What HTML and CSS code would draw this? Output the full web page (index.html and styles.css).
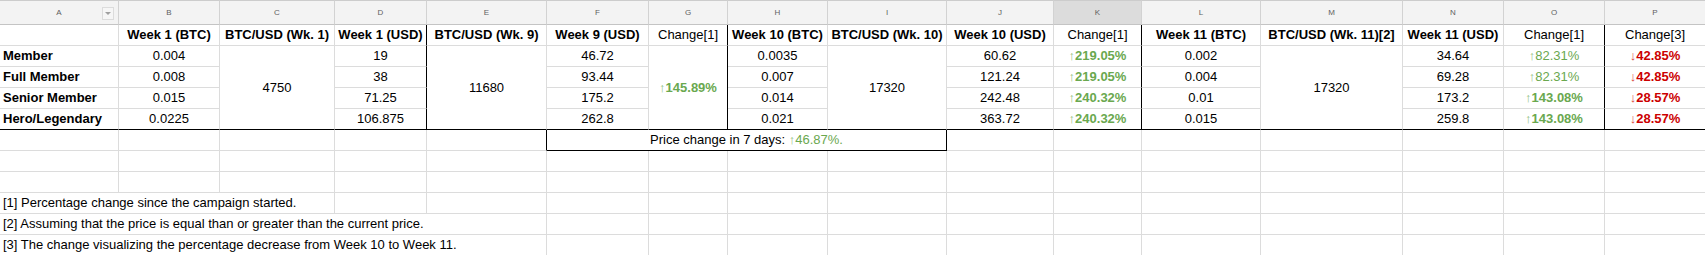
FILE: index.html
```html
<!DOCTYPE html>
<html>
<head>
<meta charset="utf-8">
<link rel="stylesheet" href="styles.css">
</head>
<body>
<div class="sheet">
  <!-- column headers -->
  <div class="h ha">A<span class="filter"><span class="tri"></span></span></div>
  <div class="h">B</div>
  <div class="h">C</div>
  <div class="h">D</div>
  <div class="h">E</div>
  <div class="h">F</div>
  <div class="h">G</div>
  <div class="h">H</div>
  <div class="h">I</div>
  <div class="h">J</div>
  <div class="h sel">K</div>
  <div class="h">L</div>
  <div class="h">M</div>
  <div class="h">N</div>
  <div class="h">O</div>
  <div class="h">P</div>

  <!-- row 1 -->
  <div class="c"></div>
  <div class="c b">Week 1 (BTC)</div>
  <div class="c b">BTC/USD (Wk. 1)</div>
  <div class="c b kr">Week 1 (USD)</div>
  <div class="c b">BTC/USD (Wk. 9)</div>
  <div class="c b">Week 9 (USD)</div>
  <div class="c kr">Change[1]</div>
  <div class="c b">Week 10 (BTC)</div>
  <div class="c b">BTC/USD (Wk. 10)</div>
  <div class="c b">Week 10 (USD)</div>
  <div class="c kr">Change[1]</div>
  <div class="c b">Week 11 (BTC)</div>
  <div class="c b">BTC/USD (Wk. 11)[2]</div>
  <div class="c b">Week 11 (USD)</div>
  <div class="c kr">Change[1]</div>
  <div class="c">Change[3]</div>

  <!-- row 2 -->
  <div class="c l b">Member</div>
  <div class="c">0.004</div>
  <div class="c m4">4750</div>
  <div class="c kr">19</div>
  <div class="c m4">11680</div>
  <div class="c">46.72</div>
  <div class="c m4 kr g b"><span class="ar">↑</span>145.89%</div>
  <div class="c">0.0035</div>
  <div class="c m4">17320</div>
  <div class="c">60.62</div>
  <div class="c kr g b"><span class="ar">↑</span>219.05%</div>
  <div class="c">0.002</div>
  <div class="c m4">17320</div>
  <div class="c">34.64</div>
  <div class="c kr g"><span class="ar">↑</span>82.31%</div>
  <div class="c r b"><span class="ar">↓</span>42.85%</div>

  <!-- row 3 -->
  <div class="c l b">Full Member</div>
  <div class="c">0.008</div>
  <div class="c kr">38</div>
  <div class="c">93.44</div>
  <div class="c">0.007</div>
  <div class="c">121.24</div>
  <div class="c kr g b"><span class="ar">↑</span>219.05%</div>
  <div class="c">0.004</div>
  <div class="c">69.28</div>
  <div class="c kr g"><span class="ar">↑</span>82.31%</div>
  <div class="c r b"><span class="ar">↓</span>42.85%</div>

  <!-- row 4 -->
  <div class="c l b">Senior Member</div>
  <div class="c">0.015</div>
  <div class="c kr">71.25</div>
  <div class="c">175.2</div>
  <div class="c">0.014</div>
  <div class="c">242.48</div>
  <div class="c kr g b"><span class="ar">↑</span>240.32%</div>
  <div class="c">0.01</div>
  <div class="c">173.2</div>
  <div class="c kr g b"><span class="ar">↑</span>143.08%</div>
  <div class="c r b"><span class="ar">↓</span>28.57%</div>

  <!-- row 5 -->
  <div class="c l b kb">Hero/Legendary</div>
  <div class="c kb">0.0225</div>
  <div class="c kr kb">106.875</div>
  <div class="c kb">262.8</div>
  <div class="c kb">0.021</div>
  <div class="c kb">363.72</div>
  <div class="c kr kb g b"><span class="ar">↑</span>240.32%</div>
  <div class="c kb">0.015</div>
  <div class="c kb">259.8</div>
  <div class="c kr kb g b"><span class="ar">↑</span>143.08%</div>
  <div class="c kb r b"><span class="ar">↓</span>28.57%</div>

  <!-- row 6 -->
  <div class="c"></div>
  <div class="c"></div>
  <div class="c"></div>
  <div class="c"></div>
  <div class="c kr"></div>
  <div class="c span4 kr kb">Price change in 7 days:&nbsp;<span class="g"><span class="ar">↑</span>46.87%.</span></div>
  <div class="c"></div>
  <div class="c"></div>
  <div class="c"></div>
  <div class="c"></div>
  <div class="c"></div>
  <div class="c"></div>
  <div class="c"></div>

  <!-- row 7 -->
  <div class="c"></div><div class="c"></div><div class="c"></div><div class="c"></div>
  <div class="c"></div><div class="c"></div><div class="c"></div><div class="c"></div>
  <div class="c"></div><div class="c"></div><div class="c"></div><div class="c"></div>
  <div class="c"></div><div class="c"></div><div class="c"></div><div class="c"></div>

  <!-- row 8 -->
  <div class="c"></div><div class="c"></div><div class="c"></div><div class="c"></div>
  <div class="c"></div><div class="c"></div><div class="c"></div><div class="c"></div>
  <div class="c"></div><div class="c"></div><div class="c"></div><div class="c"></div>
  <div class="c"></div><div class="c"></div><div class="c"></div><div class="c"></div>

  <!-- row 9 -->
  <div class="c l note span3">[1] Percentage change since the campaign started.</div>
  <div class="c"></div><div class="c"></div><div class="c"></div><div class="c"></div>
  <div class="c"></div><div class="c"></div><div class="c"></div><div class="c"></div>
  <div class="c"></div><div class="c"></div><div class="c"></div><div class="c"></div>
  <div class="c"></div>

  <!-- row 10 -->
  <div class="c l note span5">[2] Assuming that the price is equal than or greater than the current price.</div>
  <div class="c"></div><div class="c"></div><div class="c"></div><div class="c"></div>
  <div class="c"></div><div class="c"></div><div class="c"></div><div class="c"></div>
  <div class="c"></div><div class="c"></div><div class="c"></div>

  <!-- row 11 -->
  <div class="c l note span5">[3] The change visualizing the percentage decrease from Week 10 to Week 11.</div>
  <div class="c"></div><div class="c"></div><div class="c"></div><div class="c"></div>
  <div class="c"></div><div class="c"></div><div class="c"></div><div class="c"></div>
  <div class="c"></div><div class="c"></div><div class="c"></div>
</div>
</body>
</html>
```

FILE: styles.css
```css
html, body {
  margin: 0;
  padding: 0;
  background: #ffffff;
  overflow: hidden;
}

body {
  width: 1705px;
  height: 255px;
  font-family: "Liberation Sans", Arial, sans-serif;
  font-size: 13px;
  color: #000000;
}

.sheet {
  display: grid;
  grid-template-columns: 119px 101px 115px 92px 120px 102px 79px 100px 119px 107px 88px 119px 142px 101px 101px 101px;
  grid-template-rows: 25px repeat(11, 21px);
  width: 1706px;
}

.h {
  box-sizing: border-box;
  display: flex;
  align-items: center;
  justify-content: center;
  background: #f3f3f3;
  border-top: 1px solid #cccccc;
  border-bottom: 1px solid #c4c4c4;
  border-right: 1px solid #d2d2d2;
  font-size: 8px;
  color: #5f5f5f;
  position: relative;
}

.h.sel {
  background: #dcdcdc;
}

.filter {
  position: absolute;
  left: 102px;
  top: 6px;
  width: 12px;
  height: 13px;
  box-sizing: border-box;
  border: 1px solid #dcdcdc;
  background: #f6f6f6;
  display: flex;
  align-items: center;
  justify-content: center;
}

.tri {
  width: 0;
  height: 0;
  border-left: 3px solid transparent;
  border-right: 3px solid transparent;
  border-top: 3px solid #a0a0a0;
}

.c {
  box-sizing: border-box;
  display: flex;
  align-items: center;
  justify-content: center;
  border-right: 1px solid #dcdcdc;
  border-bottom: 1px solid #dcdcdc;
  line-height: 20px;
  white-space: nowrap;
  overflow: hidden;
}

.l {
  justify-content: flex-start;
  padding-left: 3px;
}

.b {
  font-weight: bold;
}

.kr {
  border-right-color: #000000;
}

.kb {
  border-bottom-color: #000000;
}

.m4 {
  grid-row: span 4;
  border-bottom-color: #000000;
}

.span3 {
  grid-column: span 3;
}

.span4 {
  grid-column: span 4;
}

.span5 {
  grid-column: span 5;
}

.g {
  color: #6aa84f;
}

.r {
  color: #cc0000;
}

.ar {
  opacity: 0.75;
}
```
